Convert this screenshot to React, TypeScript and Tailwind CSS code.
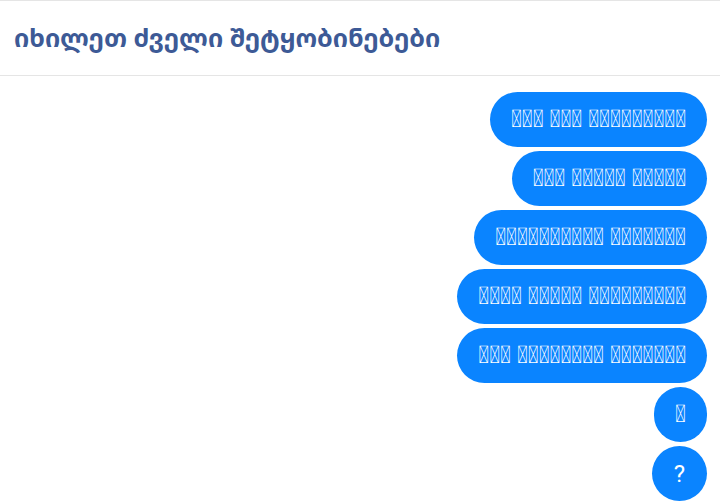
import React from "react";

const msgs = [
  "\uE000\uE000\uE000 \uE000\uE000\uE000 \uE000\uE000\uE000\uE000\uE000\uE000\uE000\uE000\uE000",
  "\uE000\uE000\uE000 \uE000\uE000\uE000\uE000\uE000 \uE000\uE000\uE000\uE000\uE000",
  "\uE000\uE000\uE000\uE000\uE000\uE000\uE000\uE000\uE000\uE000 \uE000\uE000\uE000\uE000\uE000\uE000\uE000",
  "\uE000\uE000\uE000\uE000 \uE000\uE000\uE000\uE000\uE000 \uE000\uE000\uE000\uE000\uE000\uE000\uE000\uE000\uE000",
  "\uE000\uE000\uE000 \uE000\uE000\uE000\uE000\uE000\uE000\uE000\uE000 \uE000\uE000\uE000\uE000\uE000\uE000\uE000",
];

export default function App() {
  return (
    <div className="w-[720px] h-[504px] bg-white overflow-hidden flex flex-col">
      <div className="h-[76px] shrink-0 border-t border-b border-[#e5e5e5] flex items-center px-[14px]">
        <h1 className="text-[25.2px] font-bold text-[#3d5a96]" style={{ fontFamily: '"Noto Sans Georgian", "DejaVu Sans", sans-serif' }}>
          იხილეთ ძველი შეტყობინებები
        </h1>
      </div>
      <div className="flex flex-col items-end gap-[4px] pt-[16px] pr-[13px]" style={{ fontFamily: 'Roboto, sans-serif' }}>
        {msgs.map((m, i) => (
          <div key={i} className="h-[55px] px-[21px] rounded-full bg-[#0a84ff] text-white text-[24.5px] flex items-center">
            {m}
          </div>
        ))}
        <div className="h-[55px] w-[53px] rounded-full bg-[#0a84ff] text-white text-[24.5px] flex items-center justify-center">
          {"\uE000"}
        </div>
        <div className="h-[55px] w-[55px] rounded-full bg-[#0a84ff] text-white text-[24px] flex items-center justify-center">
          ?
        </div>
      </div>
    </div>
  );
}
